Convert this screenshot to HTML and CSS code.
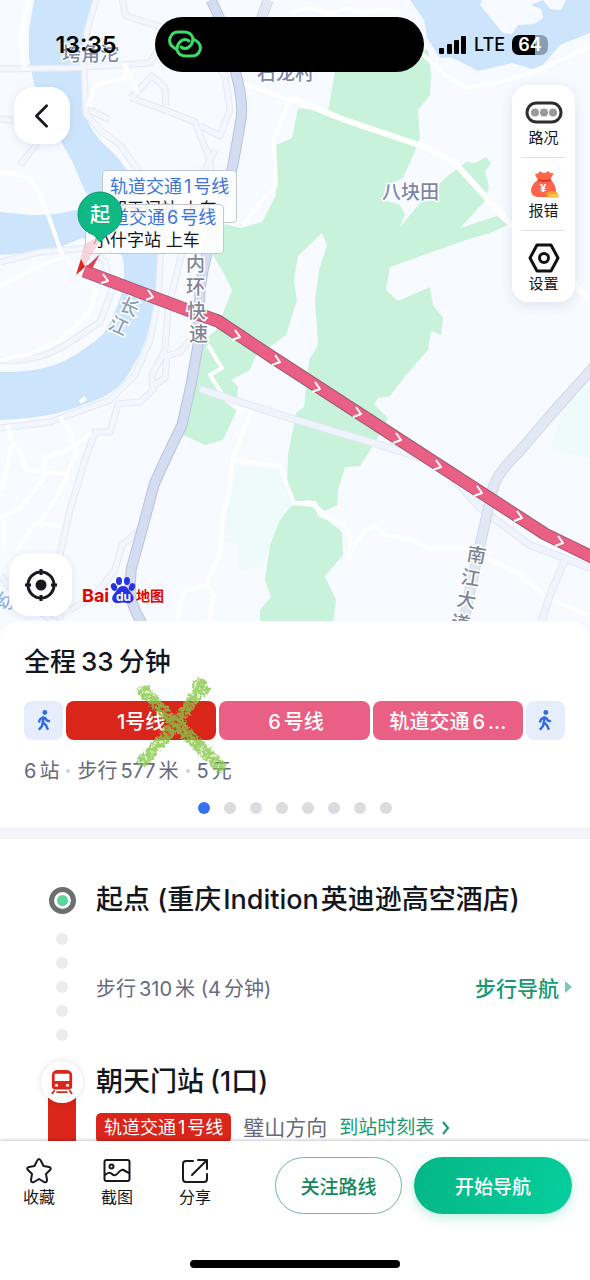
FILE: index.html
```html
<!DOCTYPE html>
<html lang="zh-CN">
<head>
<meta charset="utf-8">
<meta name="viewport" content="width=device-width, initial-scale=1">
<title>路线详情</title>
<link rel="stylesheet" href="styles.css">
</head>
<body>
<div class="app">
  <section class="map" aria-label="地图">
    <svg class="map-canvas" viewBox="0 0 590 642" preserveAspectRatio="xMidYMin slice">
      <rect class="land" width="590" height="642"/>
      <!-- pale fields -->
      <path class="field" d="M235 467L282 468L287 488L293 503L280 530L262 565L240 572L238 545L224 540L228 490Z"/>
      <path class="field" d="M590 385L565 405L550 450L590 458Z"/>
      <!-- rivers -->
      <path class="water" d="M34 0L29 30L29 58L34 84L45 115L62 143L73 163L84 189L94 205Q60 216 30 215L0 212V255Q40 252 60 247L82 238Q108 243 122 256Q126 268 122 292Q114 318 103 334Q88 348 66 360Q40 373 0 372V420Q55 418 85 404Q118 395 132 368Q148 342 153 312Q159 285 157 255Q154 225 140 195Q132 176 118 158L99 139Q86 124 83 105L82 68L86 40L98 0Z"/>
      <path class="water" d="M410 0L424 20L427 38L440 58L450 57L463 63L478 71L512 63L532 69L543 65L560 45L590 33V0H566L561 10L550 9L543 0L531 5L541 9L543 18L534 24L518 25L512 34L503 33L480 5L482 0Z"/>
      <!-- woodland -->
      <path class="green" d="M337 60L428 50L431 75L430 95L418 110L420 138L412 158L403 178L385 187L384 200L400 205L405 215L399 228L426 196L449 175L466 162L475 163L486 157L491 163L485 171L489 187L484 202L460 228L497 216L508 225L490 233L466 240L390 267L386 290L398 301L430 287L433 305L443 318L441 335L431 331L428 350L406 375L390 396L378 398L374 404L388 418L376 441L360 466L345 467L338 490L337 505L325 511L310 500L292 502L287 485L288 455L296 413L304 407L309 360L318 345L315 300L319 270L327 245L322 233L298 256L294 280L297 300L286 335L270 347L255 357L250 370L231 380L238 386L236 412L223 440L205 445L183 435L193 400L197 375L204 340L216 330L225 308L232 290L222 270L211 252L225 224L240 228L262 222L276 195L276 145L292 138L298 108L328 112Z"/>
      <path class="green" d="M292 505L280 520L270 545L265 580L271 597L260 610V642H331L336 600L325 576L343 555L342 532L312 507Z"/>
      <!-- minor roads with a faint casing -->
      <g class="road-case">
        <path d="M0 69L70 68L150 63L158 50L170 20"/>
        <path d="M84 68L86 114L100 130L120 145L145 180L162 225L158 300L150 340L135 375L110 400L50 422L0 428"/>
        <path d="M96 0L87 30L83 67M122 0L126 16L165 28M90 110L110 120M131 98L165 110L195 122L210 160L214 190"/>
        <path d="M131 98L152 76L165 88L166 106M200 126L220 136L230 110L225 75L200 50"/>
        <path d="M0 119L28 122L36 145L20 165"/>
        <path d="M0 360Q40 363 70 342L100 322L112 290L105 262L90 248L40 252L0 262"/>
        <path d="M215 150L205 170L195 210L180 260L168 310L165 350L152 375L153 390L140 402L118 404L110 432L95 432L85 460L70 510L60 555L60 620"/>
        <path d="M190 340L180 352L167 356L165 378L153 386M140 530L122 545L115 570L95 595L70 610M0 575L20 600L60 625"/>
      </g>
      <g class="road-fill">
        <path d="M0 69L70 68L150 63L158 50L170 20"/>
        <path d="M84 68L86 114L100 130L120 145L145 180L162 225L158 300L150 340L135 375L110 400L50 422L0 428"/>
        <path d="M96 0L87 30L83 67M122 0L126 16L165 28M90 110L110 120M131 98L165 110L195 122L210 160L214 190"/>
        <path d="M131 98L152 76L165 88L166 106M200 126L220 136L230 110L225 75L200 50"/>
        <path d="M0 119L28 122L36 145L20 165"/>
        <path d="M0 360Q40 363 70 342L100 322L112 290L105 262L90 248L40 252L0 262"/>
        <path d="M215 150L205 170L195 210L180 260L168 310L165 350L152 375L153 390L140 402L118 404L110 432L95 432L85 460L70 510L60 555L60 620"/>
        <path d="M190 340L180 352L167 356L165 378L153 386M140 530L122 545L115 570L95 595L70 610M0 575L20 600L60 625"/>
      </g>
      <!-- white lanes -->
      <g class="lane">
        <path d="M28 0L20 40L25 70M0 173Q28 172 37 188L50 220L62 255L80 272L96 290L90 312L60 340L30 354L0 360"/>
        <path d="M62 258L30 270L0 286M88 106L95 85L125 78V64L138 94"/>
        <path d="M8 425L12 443L2 490M12 443L20 450L26 470L65 474M60 417L72 433L76 455L60 490L40 525M92 433L72 448L44 458L43 480L20 508L0 518M36 522L60 527M4 520V550M36 522L16 552"/>
        <path d="M290 98L274 140L276 185L262 200L243 225M240 83L290 100"/>
        <path d="M208 345L222 368L210 375L226 400L240 410L252 408L232 460L230 490L222 520L221 550L206 585L184 590L176 625M206 585L214 595L208 625M233 460L280 466L287 485L294 503H315L320 515L345 525L352 545L348 560M294 503H315M348 555L365 530L375 525L385 535L410 540L430 548L465 548L490 560L520 575L550 600L590 615"/>
        <path d="M290 12L310 8L330 14L345 8L362 12L380 10L402 12M418 50L445 75L465 88L500 82L535 72L590 46"/>
        <path d="M80 402L86 398"/>
      </g>
      <path class="lane-wide" d="M290 98L345 120L425 147L455 163L512 226L590 300"/>
      <!-- elevated roads -->
      <path class="pale-case" d="M200 389L240 402L290 418L380 445L440 464L480 508L530 545L590 568"/>
      <path class="pale-fill" d="M200 389L240 402L290 418L380 445L440 464L480 508L530 545L590 568"/>
      <path class="pale-case" d="M565 560L550 595L535 642"/>
      <path class="pale-fill" d="M565 560L550 595L535 642"/>
      <path class="high-case soft" d="M600 360L555 410L518 453Q498 472 493 488L480 545L470 590L460 642"/>
      <path class="high-fill soft" d="M600 360L555 410L518 453Q498 472 493 488L480 545L470 590L460 642"/>
      <path class="high-case" d="M211 0Q226 28 235 70Q245 105 240 125L233 165L218 220Q204 255 200 290L198 345L191 385L182 425Q160 470 154 485L142 530L131 570L130 595Q135 615 148 632"/>
      <path class="high-fill" d="M211 0Q226 28 235 70Q245 105 240 125L233 165L218 220Q204 255 200 290L198 345L191 385L182 425Q160 470 154 485L142 530L131 570L130 595Q135 615 148 632"/>
      <path class="high-case soft" d="M268 0L258 28"/><path class="high-fill soft" d="M268 0L258 28"/>
      <!-- selected transit route -->
      <path class="route-case" d="M84 271L198 314L218 321L272 357L545 534L600 561"/>
      <path class="route" d="M84 271L198 314L218 321L272 357L545 534L600 561"/>
      <g class="chevrons">
        <path d="M103 274L108 281L101 283M148 290L153 297L146 300M235 330L240 337L232 340M275 355L280 362L272 365M315 382L320 389L312 392M356 407L361 414L353 417M396 433L401 440L393 443M436 460L441 467L433 470M477 486L482 493L474 496M517 511L522 518L514 521M558 536L563 543L555 546"/>
      </g>
      <g class="map-text place">
        <text x="62" y="61">垮角沱</text>
        <text x="257" y="80">石龙村</text>
        <text x="382" y="199">八块田</text>
      </g>
      <g class="map-text street">
        <text x="186" y="271">内</text><text x="186" y="294">环</text><text x="187" y="318">快</text><text x="189" y="341">速</text>
        <text transform="translate(466 560) rotate(10)">南</text><text transform="translate(460 583) rotate(10)">江</text><text transform="translate(456 605) rotate(10)">大</text><text transform="translate(450 628) rotate(10)">道</text>
      </g>
      <g class="map-text river">
        <text transform="translate(118 309) rotate(25)">长</text><text transform="translate(107 328) rotate(25)">江</text>
        <text class="lake" transform="translate(-5 606) rotate(10)">幼</text>
      </g>
    </svg>

    <header class="status">
      <time class="clock">13:35</time>
      <div class="island">
        <svg class="link-icon" viewBox="0 0 36 30" aria-hidden="true"><path d="M9 20Q1 16 3 9Q5 3 11 3H17Q24 3 26 9Q26 15 22 18Q18 21 14 18"/><path d="M26 10Q35 14 33 21Q31 27 25 27H19Q12 27 10 21Q10 15 14 12Q18 9 22 12"/></svg>
      </div>
      <div class="signal">
        <svg class="bars" viewBox="0 0 28 18" aria-hidden="true"><rect y="12" width="5" height="6" rx="1"/><rect x="8" y="8" width="5" height="10" rx="1"/><rect x="15" y="4" width="5" height="14" rx="1"/><rect x="22" width="5" height="18" rx="1"/></svg>
        <span>LTE</span>
        <span class="battery">64</span>
      </div>
    </header>

    <button class="float-btn back" aria-label="返回"><svg viewBox="0 0 28 28"><path d="M19 3L8 14L19 25"/></svg></button>

    <div class="side">
      <button><svg class="side-icon" viewBox="0 0 38 30"><rect class="ink" x="2" y="6" width="34" height="19" rx="9.500"/><g fill="#999"><circle cx="10" cy="15.500" r="4"/><circle cx="19" cy="15.500" r="4"/><circle cx="28" cy="15.500" r="4"/></g></svg>路况</button>
      <button><svg class="side-icon" viewBox="0 0 38 30"><path d="M10 4Q14 4 15 1Q19 5 23 1Q25 4 29 3Q25 9 26 10Q31 15 31 22Q30 27 23 27H12Q6 26 6 20Q7 13 13 10Q11 7 10 4Z" fill="#ff654b"/><path d="M13 10Q19 12 26 10" stroke="#d93b32" stroke-width="2" fill="none"/><text class="yen" x="15" y="22">¥</text><ellipse cx="27" cy="24" rx="6" ry="3" fill="#f8a52b"/><ellipse cx="29" cy="26" rx="5" ry="2" fill="#ffc74b"/></svg>报错</button>
      <button><svg class="side-icon" viewBox="0 0 38 30"><path class="ink gear" d="M12 2H26L33 15L26 28H12L5 15Z"/><circle class="ink gear" cx="19" cy="15" r="4.500"/></svg>设置</button>
    </div>

    <div class="callout callout-one"><b>轨道交通<i>1</i>号线</b><span>朝天门站 上车</span></div>
    <div class="callout callout-six"><b>轨道交通<i>6</i>号线</b><span>小什字站 上车</span></div>
    <svg class="pin" viewBox="0 0 54 86" role="img" aria-label="起点">
      <path d="M7 83L14 54L34 44L15 76Z" fill="#f5c9cd" opacity=".75"/><path d="M6 85L11 69L15 77Z" fill="#dc2420"/><path d="M16 77L30 64L22 79Z" fill="#d74756"/>
      <path d="M30 2C42 2 52 12 52 24C52 35 45 41 37 45L30 52L24 45C15 42 8 35 8 24C8 12 18 2 30 2Z" fill="#10b984" stroke="#099a6d"/>
      <text x="20" y="32">起</text>
    </svg>

    <button class="float-btn locate" aria-label="定位"><svg viewBox="0 0 32 32"><circle cx="16" cy="16" r="13"/><path d="M16 0V6M16 26V32M0 16H6M26 16H32"/><circle class="dot" cx="16" cy="16" r="5.500"/></svg></button>

    <svg class="baidu" viewBox="0 0 84 30" role="img" aria-label="Baidu 地图">
      <text class="bai" x="0" y="25">Bai</text>
      <g fill="#2932e1"><ellipse cx="32" cy="10" rx="3" ry="4" transform="rotate(-20 32 10)"/><ellipse cx="37" cy="4" rx="3" ry="4"/><ellipse cx="45" cy="4" rx="3" ry="4"/><ellipse cx="50" cy="10" rx="3" ry="4" transform="rotate(20 50 10)"/><path d="M41 9C46 9 47 14 50 17C54 22 50 27 45 26Q41 25 37 26C31 27 28 22 32 17C35 14 36 9 41 9Z"/></g>
      <text class="du" x="34" y="24">du</text>
      <text class="ditu" x="54" y="24">地图</text>
    </svg>
  </section>

  <main class="sheet">
    <section class="summary">
      <h1>全程<span class="num">33</span>分钟</h1>
      <div class="segments">
        <span class="walk"><svg viewBox="0 0 20 26" role="img" aria-label="步行"><circle cx="11" cy="3" r="3"/><path d="M10 8L8.500 15L12.500 19L15 24.500M8.500 15L7.500 20L3.500 24.500M10 8.500L5 11.500L3.500 15.500M11 9L13.500 13L17.500 14"/></svg></span>
        <button class="segment active">1号线</button>
        <button class="segment"><span class="num">6</span>号线</button>
        <button class="segment">轨道交通<span class="num">6</span>...</button>
        <span class="walk"><svg viewBox="0 0 20 26" role="img" aria-label="步行"><circle cx="11" cy="3" r="3"/><path d="M10 8L8.500 15L12.500 19L15 24.500M8.500 15L7.500 20L3.500 24.500M10 8.500L5 11.500L3.500 15.500M11 9L13.500 13L17.500 14"/></svg></span>
      </div>
      <p class="meta">6<span class="unit">站</span><i></i>步行<span class="num">577</span>米<i></i>5<span class="unit">元</span></p>
      <div class="pager"><i class="on"></i><i></i><i></i><i></i><i></i><i></i><i></i><i></i></div>
      <svg class="scribble" viewBox="0 0 110 110" aria-hidden="true">
        <defs><filter id="crayon" x="-10%" y="-10%" width="120%" height="120%"><feTurbulence type="fractalNoise" baseFrequency=".3" numOctaves="3" seed="4" result="n"/><feDisplacementMap in="SourceGraphic" in2="n" scale="7" xChannelSelector="R" yChannelSelector="B" result="d"/><feColorMatrix in="n" type="matrix" values="0 0 0 0 0  0 0 0 0 0  0 0 0 0 0  0 4 0 0 -0.9" result="m"/><feComposite in="d" in2="m" operator="in"/></filter></defs>
        <g filter="url(#crayon)"><path d="M20 20Q40 42 61 61Q78 78 96 95"/><path d="M77 16Q60 44 46 60Q32 76 19 89"/><path class="blob" d="M75 14L79 18"/></g>
      </svg>
    </section>

    <section class="steps">
      <div class="step start"><div class="rail"><span class="origin"></span></div><h2>起点 (重庆<span class="latin">Indition</span>英迪逊高空酒店)</h2></div>
      <div class="step stroll"><div class="rail trail"><i></i><i></i><i></i><i></i><i></i></div><p>步行<span class="num">310</span>米 (4<span class="unit">分钟</span>)</p><a class="walk-nav" href="#walk">步行导航</a></div>
      <div class="step station">
        <div class="rail line"><span class="train"><svg viewBox="0 0 26 28" aria-hidden="true"><path class="body" d="M9 1H17Q24 1 24 7V19Q24 22 21 22H5Q2 22 2 19V7Q2 1 9 1Z"/><rect x="5" y="5" width="16" height="8" rx="1"/><circle cx="7" cy="17.500" r="1.700"/><circle cx="19" cy="17.500" r="1.700"/><path class="track" d="M5 23L2 27M21 23L24 27M7 25H19"/></svg></span></div>
        <div>
          <h2>朝天门站<span class="paren">(1</span>口)</h2>
          <div class="direction"><span class="badge">轨道交通<i>1</i>号线</span><span>璧山方向</span><a href="#timetable">到站时刻表<svg viewBox="0 0 8 16" aria-hidden="true"><path d="M1 2L6 8L1 14"/></svg></a></div>
        </div>
      </div>
    </section>
  </main>

  <footer class="bar">
    <div class="bar-row">
      <nav class="tools">
        <button><svg viewBox="0 0 28 28"><path d="M14 2Q15 2 16 4L18.500 9L24 10Q27 11 25 13L21 17L22 23Q22 26 19 25L14 22L9 25Q6 26 6 23L7 17L3 13Q1 11 4 10L9.500 9L12 4Q13 2 14 2Z"/></svg>收藏</button>
        <button><svg viewBox="0 0 28 28"><rect x="1.500" y="3" width="25" height="21" rx="2"/><circle cx="8.500" cy="9.500" r="2"/><path d="M2 18Q6 14 9 17Q12 20 15 16Q19 11 22 14L26 16"/></svg>截图</button>
        <button><svg viewBox="0 0 28 28"><path d="M12 4H5Q2 4 2 7V22Q2 25 5 25H23Q26 25 26 22V17M17 3H26V12M26 3L11 18"/></svg>分享</button>
      </nav>
      <div class="actions"><button class="follow">关注路线</button><button class="go">开始导航</button></div>
    </div>
    <div class="home"></div>
  </footer>
</div>
</body>
</html>
```
FILE: styles.css
```css
* { box-sizing: border-box; }
body {
  margin: 0;
  color: #14161d;
  font-family: Inter, "Noto Sans CJK SC", sans-serif;
  background: #fff;
}
h1, h2, p { margin: 0; font-weight: 500; }
i { font-style: normal; }
button { font: inherit; color: inherit; border: 0; padding: 0; background: none; cursor: pointer; }
a { color: #159a70; text-decoration: none; }
svg { display: block; }

.app { display: flex; flex-direction: column; height: 100vh; overflow: hidden; }

/* map */
.map { position: relative; flex: none; height: 50.1vh; overflow: hidden; }
.map-canvas { position: absolute; inset: 0; width: 100%; height: 100%; }
.map-canvas path { stroke-linejoin: round; }
.land { fill: #f7faff; }
.field { fill: #effafa; }
.water { fill: #cde5fc; }
.green { fill: #c8f3da; }
.road-case { fill: none; stroke: #e3e9f5; stroke-width: 7; }
.road-fill { fill: none; stroke: #f3f6fd; stroke-width: 5; }
.lane { fill: none; stroke: #fff; stroke-width: 4; }
.lane-wide { fill: none; stroke: #fff; stroke-width: 6; }
.pale-case { fill: none; stroke: #e3e8f4; stroke-width: 8; }
.pale-fill { fill: none; stroke: #eff3fb; stroke-width: 6; }
.high-case { fill: none; stroke: #b9c3de; stroke-width: 11; }
.high-fill { fill: none; stroke: #d4dcf1; stroke-width: 9; }
.high-case.soft { stroke: #d0d7e8; }
.high-fill.soft { stroke: #e2e7f4; }
.route-case { fill: none; stroke: #9c5c70; stroke-width: 13; }
.route { fill: none; stroke: #ea5f84; stroke-width: 11; }
.chevrons { fill: none; stroke: #fff; stroke-width: 2; }
.map-text { font-size: 19px; font-weight: 500; paint-order: stroke; stroke: #fff; stroke-width: 3px; }
.place { fill: #7d87a8; }
.street { fill: #7f8594; }
.river { fill: #8c9fb5; }
.lake { fill: #8fb8e8; }

.status { position: relative; display: grid; grid-template-columns: 155fr 269px 166fr; padding-top: 17px; align-items: center; }
.clock { padding-left: 17px; text-align: center; font-size: 23px; font-weight: 600; color: #000; }
.island { height: 55px; border-radius: 28px; background: #000; padding: 12px; }
.link-icon { width: 36px; height: 30px; fill: none; stroke: #3ddc68; stroke-width: 3; stroke-linecap: round; }
.signal { display: flex; align-items: center; gap: 7px; padding-left: 15px; font-size: 18px; font-weight: 500; color: #000; }
.bars { width: 28px; height: 18px; }
.battery {
  width: 36px; border-radius: 7px; line-height: 20px; text-align: center; font-weight: 600;
  color: #fff; background: linear-gradient(90deg, #000 64%, #8d9db1 64%);
}

.float-btn { position: absolute; display: grid; place-items: center; background: #fff; box-shadow: 0 2px 8px rgba(60, 80, 130, .12); }
.float-btn svg { fill: none; stroke: #17191f; }
.back { left: 14px; top: 87px; width: 56px; height: 57px; border-radius: 20px; }
.back svg { width: 26px; stroke-width: 3; stroke-linecap: round; stroke-linejoin: round; }
.locate { left: 9px; bottom: 25px; width: 63px; height: 63px; border-radius: 20px; }
.locate svg { width: 32px; stroke-width: 3; }
.locate .dot { fill: #17191f; stroke: none; }

.side {
  position: absolute; right: 15px; top: 85px; width: 63px; padding: 12px 10px 7px;
  display: flex; flex-direction: column; border-radius: 16px; background: #fff;
  box-shadow: 0 3px 12px rgba(60, 80, 130, .14); font-size: 15px; line-height: 22px;
}
.side button { display: flex; flex-direction: column; align-items: center; padding-bottom: 8px; white-space: nowrap; }
.side button + button { border-top: 1px solid #dfe1e6; padding-top: 12px; }
.side button:last-child { padding-bottom: 0; }
.side-icon { width: 38px; height: 30px; flex: none; }
.ink { fill: none; stroke: #2b2d31; stroke-width: 3; stroke-linejoin: round; }
.ink.gear { stroke: #111; }
.yen { font-size: 11px; font-weight: 700; fill: #fff; }

.callout {
  position: absolute; display: flex; flex-direction: column; padding: 2px 7px; line-height: 22px;
  border: 1px solid #c3c9d0; border-radius: 4px; background: rgba(255, 255, 255, .9); font-size: 17px; color: #15171c; white-space: nowrap;
}
.callout b { font-weight: 400; font-size: 18px; color: #3d74dc; }
.callout b i, .badge i { margin: 0 2px; }
.callout-one { left: 102px; top: 170px; padding-top: 5px; }
.callout-six { left: 85px; top: 204px; }
.pin { position: absolute; left: 70px; top: 190px; width: 54px; height: 86px; }
.pin text { font-size: 20px; font-weight: 500; fill: #fff; }
.baidu { position: absolute; left: 82px; bottom: 34px; width: 84px; height: 30px; overflow: visible; }
.baidu text { font-weight: 700; }
.bai { font-size: 18px; fill: #e10601; }
.du { font-size: 12px; fill: #fff; }
.ditu { font-size: 14px; fill: #e10601; }

/* sheet */
.sheet {
  position: relative; flex: 1; min-height: 0; margin-top: -20px; overflow: hidden;
  display: flex; flex-direction: column; border-radius: 20px 20px 0 0; background: #fff;
}
.summary { position: relative; flex: none; padding: 23px 25px 13px 24px; border-bottom: 12px solid #f4f5fb; }
h1 { font-size: 26px; line-height: 36px; }
h1 .num { margin: 0 5px; }
.num { margin: 0 3px; }
.unit { margin-left: 3px; }
.segments { display: flex; gap: 3px; margin-top: 21px; }
.segment { flex: 1; height: 39px; border-radius: 8px; background: #ea5f84; color: #fff; font-size: 20px; font-weight: 500; white-space: nowrap; }
.segment.active { background: #da251b; }
.walk { display: grid; place-items: center; width: 39px; height: 39px; border-radius: 8px; background: #e6edfc; }
.walk svg { width: 16px; height: 21px; fill: #346be0; }
.walk path { fill: none; stroke: #346be0; stroke-width: 3; stroke-linejoin: round; }
.meta { display: flex; align-items: center; margin-top: 15px; font-size: 20px; font-weight: 400; line-height: 32px; color: #666a7c; }
.meta i { width: 4px; height: 4px; margin: 0 7px; border-radius: 50%; background: #d2d4da; }
.pager { display: flex; justify-content: center; gap: 14px; margin-top: 15px; }
.pager i { width: 12px; height: 12px; border-radius: 50%; background: #dbdce0; }
.pager .on { background: #3474f0; }
.scribble { position: absolute; left: 124px; top: 50px; width: 110px; height: 110px; fill: none; stroke: #86c848; stroke-width: 12; stroke-linecap: round; opacity: .8; pointer-events: none; }
.scribble .blob { stroke-width: 14; }

.steps { flex: 1; min-height: 0; overflow: hidden; padding: 40px 18px 0 42px; }
.step { display: grid; grid-template-columns: 40px 1fr auto; column-gap: 14px; }
.rail { display: flex; flex-direction: column; align-items: center; }
h2 { font-size: 27px; line-height: 42px; white-space: nowrap; }
.latin { margin: 0 2px; }
.paren { margin-left: 6px; }
.start { align-items: center; }
.origin { width: 27px; height: 27px; border: 5px solid #6e6e70; border-radius: 50%; background: #5bd59a; box-shadow: inset 0 0 0 3px #fff; }
.stroll { align-items: center; padding: 12px 0; color: #666a7c; font-size: 20px; }
.stroll p { font-weight: 400; }
.trail { gap: 12px; }
.trail i { width: 12px; height: 12px; border-radius: 50%; background: #ececee; }
.walk-nav { display: flex; align-items: center; gap: 6px; font-size: 21px; font-weight: 500; }
.walk-nav::after { content: ""; border: 6px solid transparent; border-left: 7px solid #78cbae; border-right: 0; }
.station { padding-top: 8px; }
.line { min-height: 120px; background: linear-gradient(#da251b, #da251b) center 36px / 28px 100% no-repeat; }
.train { display: grid; place-items: center; width: 42px; height: 42px; border-radius: 50%; background: #fff; box-shadow: 0 0 6px rgba(0, 0, 0, .12); }
.train svg { width: 24px; height: 28px; fill: #fff; }
.train .body { fill: #da251b; }
.track { stroke: #da251b; stroke-width: 2; }
.direction { display: flex; align-items: center; gap: 12px; margin-top: 10px; font-size: 21px; line-height: 30px; color: #666a7c; white-space: nowrap; }
.direction a { display: flex; align-items: center; gap: 8px; font-size: 19px; }
.direction a svg { width: 8px; height: 16px; fill: none; stroke: #159a70; stroke-width: 2; }
.badge { padding: 0 8px; border-radius: 5px; background: #da251b; color: #fff; font-size: 18px; }

/* bottom bar */
.bar { position: relative; flex: none; padding: 16px 0 12px; background: #fff; box-shadow: 0 -1px 3px rgba(0, 0, 0, .22); }
.bar-row { display: flex; padding-right: 18px; }
.tools { display: flex; flex: none; }
.tools button { width: 78px; display: flex; flex-direction: column; align-items: center; padding-bottom: 4px; font-size: 16px; line-height: 24px; }
.tools svg { width: 28px; height: 28px; fill: none; stroke: #17191f; stroke-width: 2; stroke-linecap: round; stroke-linejoin: round; }
.actions { display: flex; flex: 1; gap: 12px; margin-left: 41px; }
.actions button { height: 57px; border-radius: 29px; font-size: 19px; font-weight: 500; }
.actions .follow { flex: 126; border: 1px solid #6fb99c; color: #12875f; }
.go { flex: 159; color: #fff; background: linear-gradient(100deg, #05b685, #05cf9d); box-shadow: 0 4px 12px rgba(5, 190, 140, .25); }
.home { width: 210px; height: 8px; margin: 46px auto 0; border-radius: 4px; background: #000; }
```
